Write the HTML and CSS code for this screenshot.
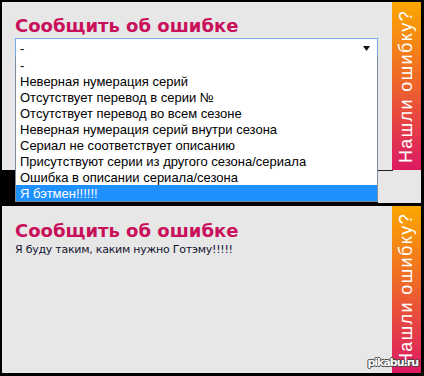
FILE: index.html
```html
<!DOCTYPE html>
<html lang="ru">
<head>
    <meta charset="UTF-8">
    <title>Сообщить об ошибке</title>
    <link rel="stylesheet" href="styles.css">
</head>
<body>
    <div class="frame">
        <div class="panel panel-top">
            <div class="panel-body">
                <h2 class="title">Сообщить об ошибке</h2>
                <div class="select">
                    <span>-</span>
                    <svg class="arrow" width="7" height="5" viewBox="0 0 7 5"><polygon points="0,0 7,0 3.5,5" fill="#111"/></svg>
                </div>
                <ul class="options">
                    <li>-</li>
                    <li>Неверная нумерация серий</li>
                    <li>Отсутствует перевод в серии №</li>
                    <li>Отсутствует перевод во всем сезоне</li>
                    <li>Неверная нумерация серий внутри сезона</li>
                    <li>Сериал не соответствует описанию</li>
                    <li>Присутствуют серии из другого сезона/сериала</li>
                    <li>Ошибка в описании сериала/сезона</li>
                    <li class="active">Я бэтмен!!!!!!</li>
                </ul>
            </div>
            <div class="tab"><span>Нашли ошибку?</span></div>
        </div>
        <div class="strip"><div class="strip-fill"></div></div>
        <div class="panel panel-bottom">
            <div class="panel-body">
                <h2 class="title">Сообщить об ошибке</h2>
                <p class="message">Я буду таким, каким нужно Готэму!!!!!</p>
            </div>
            <div class="tab"><span>Нашли ошибку?</span></div>
            <div class="watermark">pikabu.ru</div>
        </div>
    </div>
</body>
</html>
```

FILE: styles.css
```css
html, body { margin: 0; padding: 0; }
body { background: #000; width: 424px; height: 376px; overflow: hidden; }
.frame { padding: 2px 3px 3px 2px; }

.panel { display: flex; position: relative; }
.panel-top { height: 168px; z-index: 2; }
.panel-bottom { height: 167px; margin-top: 3px; }
.panel-body { flex: 1; background: #e7e7e7; position: relative; padding: 0 13px; }

.title { margin: 0; font-family: "DejaVu Sans", Verdana, sans-serif; font-weight: bold; font-size: 18px; color: #c8105b; line-height: 22px; }
.panel-top .title { padding-top: 13px; }
.panel-bottom .title { padding-top: 14px; }

.select { margin-top: 1px; height: 18px; border: 1px solid #78a6e2; background: #fff; display: flex; align-items: center; justify-content: space-between; padding: 0 7px 0 4px; width: 350px; font-family: "Liberation Sans", Arial, sans-serif; font-size: 13px; color: #000; }
.arrow { display: block; }

.options { position: absolute; left: 13px; top: 55px; width: 361px; margin: 0; padding: 0; list-style: none; background: #fff; border: 1px solid #7f8c99; border-top: none; font-family: "Liberation Sans", Arial, sans-serif; font-size: 13px; color: #000; }
.options li { height: 16px; line-height: 17px; padding-left: 4px; white-space: nowrap; }
.options li.active { background: #1e90ff; color: #fff; }

.tab { width: 29px; background: linear-gradient(#fca700, #ef6a27 45%, #dc1963); display: flex; align-items: center; justify-content: center; overflow: hidden; }
.tab span { transform: rotate(-90deg); white-space: nowrap; color: #fff; font-family: "Liberation Sans", Arial, sans-serif; font-size: 18px; letter-spacing: 1.4px; }

.strip { height: 33px; display: flex; justify-content: flex-end; }
.strip-fill { width: 43px; background: linear-gradient(#222, #222) no-repeat 0 0 / 15px 1px, #e7e7e7; }

.message { margin: 1px 0 0; font-family: "DejaVu Sans", Verdana, sans-serif; font-size: 11px; letter-spacing: -0.25px; color: #141430; }

.watermark { position: absolute; right: 3px; bottom: 4px; font-family: "DejaVu Sans", Verdana, sans-serif; font-weight: bold; font-size: 11px; color: #fff; text-shadow: 1px 0 #444, -1px 0 #444, 0 1px #444, 0 -1px #444; letter-spacing: -1px; }
```
